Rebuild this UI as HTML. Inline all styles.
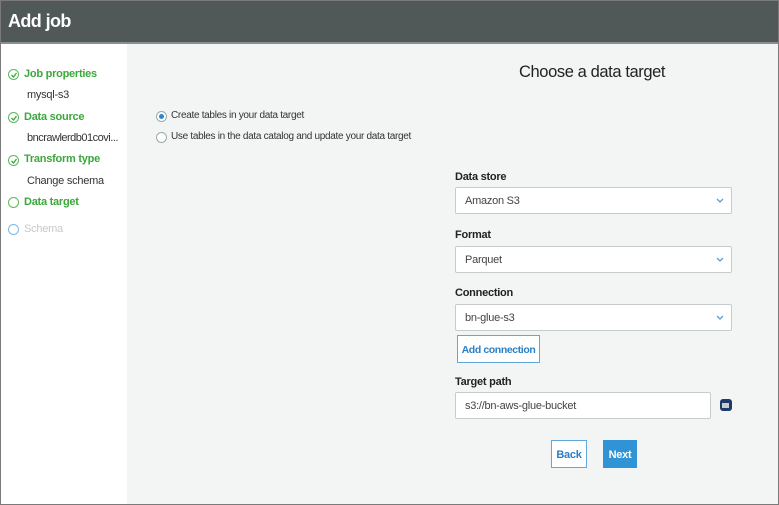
<!DOCTYPE html>
<html><head><style>
*{margin:0;padding:0;box-sizing:border-box}
body{width:779px;height:505px;position:relative;overflow:hidden;font-family:"Liberation Sans",sans-serif;background:#f3f4f4;letter-spacing:-0.25px}
.frame{position:absolute;left:0;top:0;width:779px;height:505px;border:1px solid #7a7a7a;z-index:5;pointer-events:none}
.hdr{position:absolute;left:0;top:0;width:779px;height:44px;background:#505858;color:#fff;font-weight:bold;font-size:18px;padding:11px 0 0 8px;border-bottom:2px solid #8a8f90;letter-spacing:-0.6px}
.side{position:absolute;left:0;top:44px;width:127px;height:461px;background:#fff}
.a{position:absolute;font-size:11px;white-space:nowrap}
.g{color:#3aa83a;font-weight:bold}
.ci{position:absolute;width:11px;height:11px;border:1.5px solid #5cb85c;border-radius:50%}
.t{color:#333}
.lbl{position:absolute;left:455px;font-size:11px;font-weight:bold;color:#222}
.sel{position:absolute;left:455px;width:277px;height:27px;background:#fff;border:1px solid #c8cbcc;border-radius:2px;font-size:11px;color:#444;padding:7px 0 0 9px}
.sel svg{position:absolute;right:7px;top:10px}
.btn{position:absolute;font-size:11px;font-weight:bold;text-align:center;white-space:nowrap}
</style></head><body>
<div class="frame"></div>
<div class="hdr">Add job</div>
<div class="side"></div>
<div class="ci" style="left:8px;top:69px"></div><svg style="position:absolute;left:10px;top:71px" width="8" height="8"><path d="M1.5 4 L3.5 6 L6.5 2" stroke="#3aa83a" stroke-width="1.3" fill="none"/></svg>
<div class="a g" style="left:24px;top:68px">Job properties</div>
<div class="a t" style="left:27px;top:89px">mysql-s3</div>
<div class="ci" style="left:8px;top:112px"></div><svg style="position:absolute;left:10px;top:114px" width="8" height="8"><path d="M1.5 4 L3.5 6 L6.5 2" stroke="#3aa83a" stroke-width="1.3" fill="none"/></svg>
<div class="a g" style="left:24px;top:111px">Data source</div>
<div class="a t" style="left:27px;top:132px;letter-spacing:-0.5px">bncrawlerdb01covi...</div>
<div class="ci" style="left:8px;top:155px"></div><svg style="position:absolute;left:10px;top:157px" width="8" height="8"><path d="M1.5 4 L3.5 6 L6.5 2" stroke="#3aa83a" stroke-width="1.3" fill="none"/></svg>
<div class="a g" style="left:24px;top:153px">Transform type</div>
<div class="a t" style="left:27px;top:175px">Change schema</div>
<div class="ci" style="left:8px;top:197px"></div>
<div class="a g" style="left:24px;top:196px">Data target</div>
<div class="ci" style="left:8px;top:224px;border-color:#7fb6e6"></div>
<div class="a" style="left:24px;top:223px;color:#c8c8c8">Schema</div>

<div class="a" style="left:519px;top:63px;font-size:16.5px;color:#222;letter-spacing:-0.4px">Choose a data target</div>
<div style="position:absolute;left:156px;top:111px;width:11px;height:11px;border-radius:50%;border:1px solid #9aa;background:#fff"><div style="width:5px;height:5px;border-radius:50%;background:#2a86d0;margin:2px"></div></div>
<div class="a t" style="left:171px;top:110px;font-size:10px;letter-spacing:-0.3px">Create tables in your data target</div>
<div style="position:absolute;left:156px;top:132px;width:11px;height:11px;border-radius:50%;border:1px solid #9aa;background:#fff"></div>
<div class="a t" style="left:171px;top:131px;font-size:10px;letter-spacing:-0.3px">Use tables in the data catalog and update your data target</div>

<div class="lbl" style="top:171px">Data store</div>
<div class="sel" style="top:187px">Amazon S3<svg width="8" height="6"><path d="M1 1 L4 4 L7 1" stroke="#5a9fd4" stroke-width="1.3" fill="none"/></svg></div>
<div class="lbl" style="top:229px">Format</div>
<div class="sel" style="top:246px">Parquet<svg width="8" height="6"><path d="M1 1 L4 4 L7 1" stroke="#5a9fd4" stroke-width="1.3" fill="none"/></svg></div>
<div class="lbl" style="top:287px">Connection</div>
<div class="sel" style="top:304px">bn-glue-s3<svg width="8" height="6"><path d="M1 1 L4 4 L7 1" stroke="#5a9fd4" stroke-width="1.3" fill="none"/></svg></div>
<div class="btn" style="left:457px;top:335px;width:83px;height:28px;background:#fff;border:1px solid #5fa8dc;color:#2a7fc6;padding-top:8px;font-size:10.5px;letter-spacing:-0.4px">Add connection</div>
<div class="lbl" style="top:376px">Target path</div>
<div class="sel" style="top:392px;width:256px">s3://bn-aws-glue-bucket</div>
<div style="position:absolute;left:720px;top:399px;width:12px;height:12px;border-radius:3px;background:#1d3b6a"><div style="width:7px;height:5px;background:#ccc;margin:4px 0 0 2px"></div></div>
<div class="btn" style="left:551px;top:440px;width:36px;height:28px;background:#fff;border:1px solid #5fa8dc;color:#2a7fc6;padding-top:8px">Back</div>
<div class="btn" style="left:603px;top:440px;width:34px;height:28px;background:#2f93d6;color:#fff;padding-top:9px">Next</div>
</body></html>
